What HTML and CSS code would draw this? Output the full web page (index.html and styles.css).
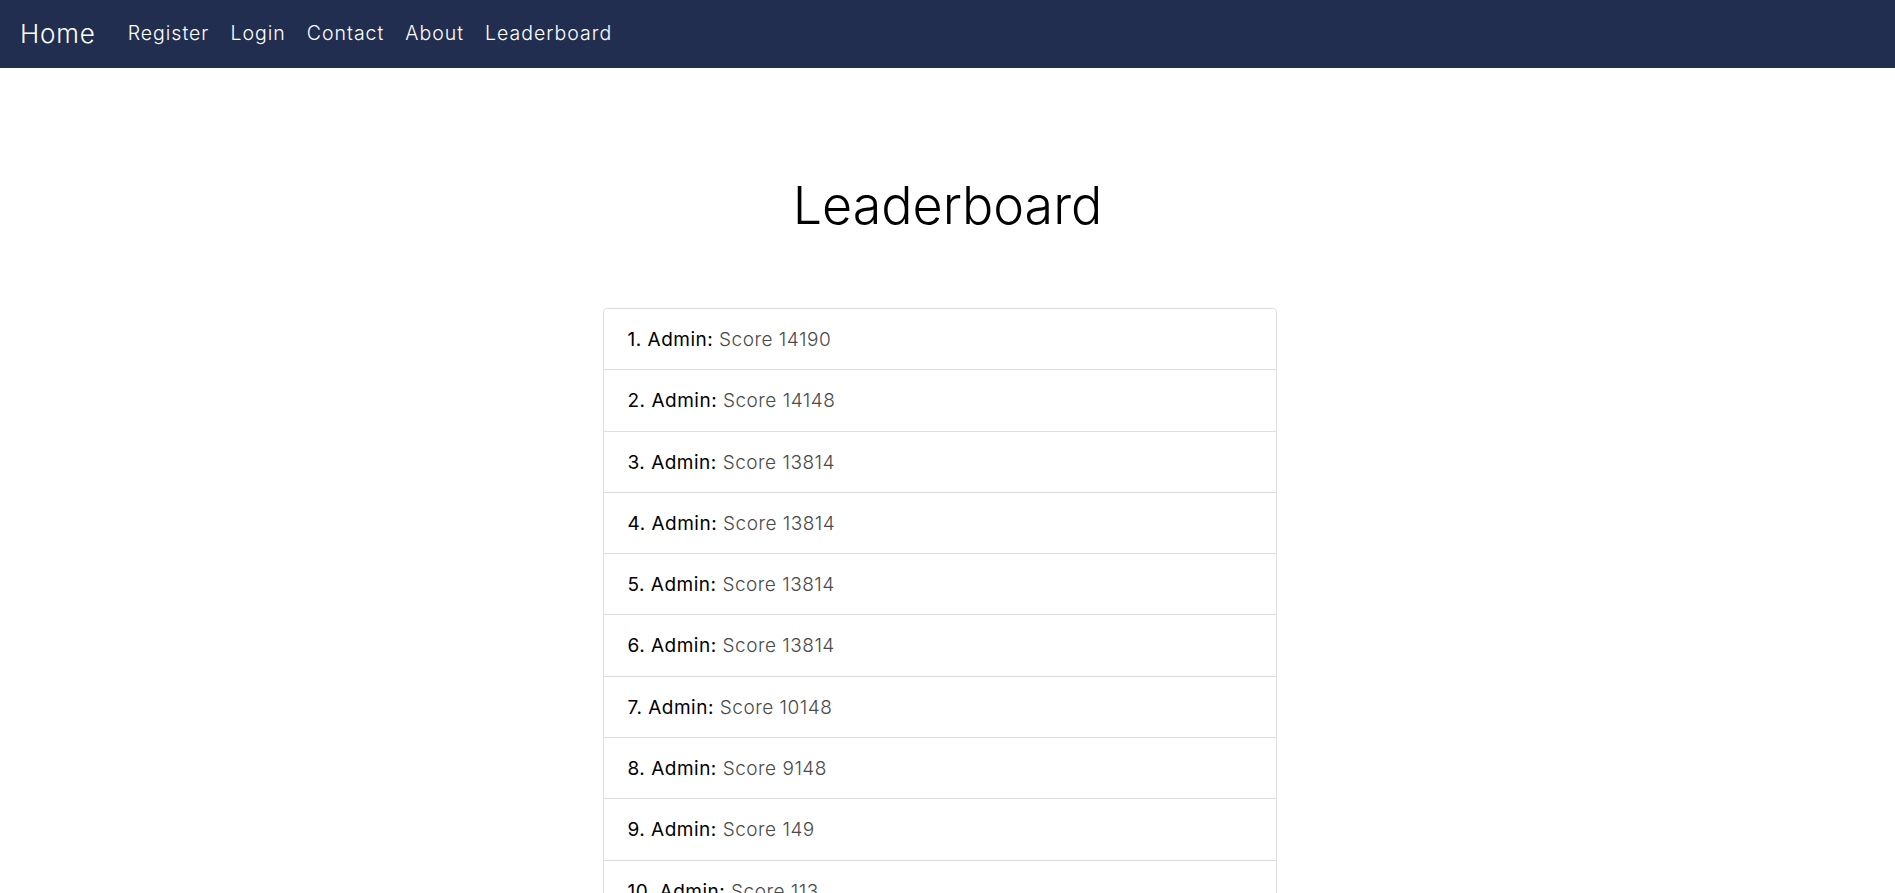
FILE: index.html
```html
<!DOCTYPE html>
<html lang="en">
<head>
<meta charset="utf-8">
<title>Leaderboard</title>
<link rel="stylesheet" href="styles.css">
</head>
<body>
<nav class="navbar">
  <a class="brand" href="#">Home</a>
  <ul class="nav">
    <li><a href="#">Register</a></li>
    <li><a href="#">Login</a></li>
    <li><a href="#">Contact</a></li>
    <li><a href="#">About</a></li>
    <li><a href="#">Leaderboard</a></li>
  </ul>
</nav>
<main class="page">
  <h1 class="title">Leaderboard</h1>
  <ul class="board">
    <li class="row"><span class="name">1. Admin</span>: <span class="score">Score 14190</span></li>
    <li class="row"><span class="name">2. Admin</span>: <span class="score">Score 14148</span></li>
    <li class="row"><span class="name">3. Admin</span>: <span class="score">Score 13814</span></li>
    <li class="row"><span class="name">4. Admin</span>: <span class="score">Score 13814</span></li>
    <li class="row"><span class="name">5. Admin</span>: <span class="score">Score 13814</span></li>
    <li class="row"><span class="name">6. Admin</span>: <span class="score">Score 13814</span></li>
    <li class="row"><span class="name">7. Admin</span>: <span class="score">Score 10148</span></li>
    <li class="row"><span class="name">8. Admin</span>: <span class="score">Score 9148</span></li>
    <li class="row"><span class="name">9. Admin</span>: <span class="score">Score 149</span></li>
    <li class="row"><span class="name">10. Admin</span>: <span class="score">Score 113</span></li>
  </ul>
</main>
</body>
</html>
```

FILE: styles.css
```css
html, body {
  margin: 0;
  padding: 0;
  overflow: hidden;
  background: #ffffff;
}
body {
  font-family: Inter, "DejaVu Sans", sans-serif;
  color: #000;
}
.navbar {
  display: flex;
  align-items: center;
  height: 68px;
  padding: 0 20px 2px;
  background: #222e50;
  box-sizing: border-box;
}
.brand {
  color: #fff;
  text-decoration: none;
  font-size: 26px;
  font-weight: 300;
  letter-spacing: 0.8px;
  margin-right: 22px;
}
.nav {
  display: flex;
  list-style: none;
  margin: 0;
  padding: 0;
}
.nav a {
  display: block;
  padding: 0 11px 0 10px;
  color: #fff;
  text-decoration: none;
  font-size: 19.5px;
  font-weight: 300;
  letter-spacing: 1px;
}
.page {
  display: flex;
  flex-direction: column;
}
.title {
  margin: 112px 0 0;
  text-align: center;
  font-size: 52px;
  font-weight: 300;
  line-height: 1;
  color: #000;
}
.board {
  list-style: none;
  margin: 76px 0 0 calc(50% - 345px);
  padding: 0;
  width: 674px;
  border: 1px solid #dedede;
  border-radius: 4px;
  box-sizing: border-box;
}
.row {
  padding: 16px 24px 15.3px;
  font-size: 19px;
  line-height: 29px;
  letter-spacing: 0.5px;
  border-top: 1px solid #dedede;
}
.row:first-child {
  border-top: none;
}
.name {
  font-weight: 400;
  color: #000;
}
.score {
  font-weight: 300;
  color: #4a4a4a;
}
```
